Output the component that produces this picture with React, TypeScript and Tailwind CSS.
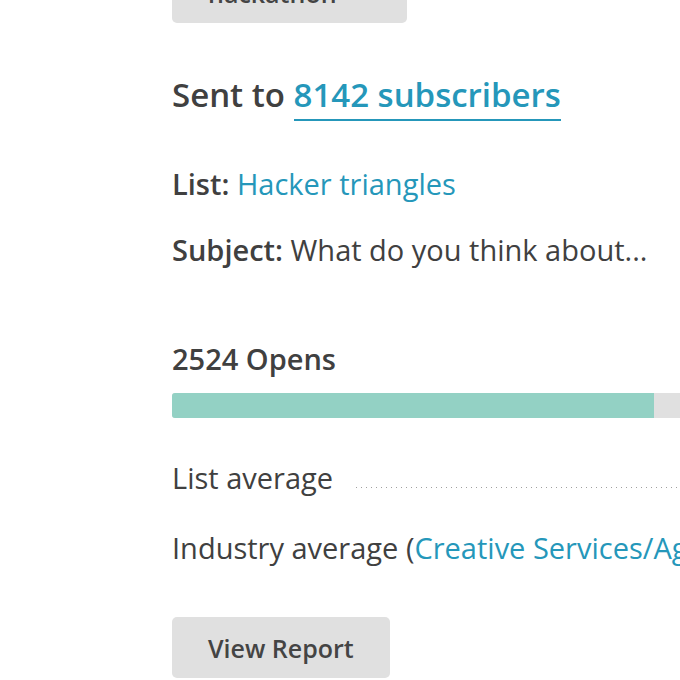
import React from "react";

function GrayButton({ label, className = "" }: { label: string; className?: string }) {
  return (
    <div
      className={`flex h-[61px] items-center whitespace-nowrap rounded-[5px] bg-[#e0e0e0] px-9 text-[25px] font-semibold leading-[32px] text-[#444] ${className}`}
    >
      {label}
    </div>
  );
}

export default function App() {
  return (
    <div className="h-[680px] w-[680px] overflow-hidden bg-white font-['Open_Sans',sans-serif] text-[#404040]">
      <div className="w-[620px] pl-[172px]">
        {/* previous card's button, cut off at the top */}
        <GrayButton label="hackathon" className="mt-[-38px] w-[235px]" />

        <h2 className="mt-[50px] whitespace-nowrap text-[33px] font-semibold leading-[44px]">
          Sent to{" "}
          <span className="border-b-2 border-[#2597ba] pb-[2px] text-[#2597ba]">8142 subscribers</span>
        </h2>

        <p className="mt-[48px] whitespace-nowrap text-[29px] leading-[38px]">
          <span className="font-semibold">List:</span> <span className="text-[#2597ba]">Hacker triangles</span>
        </p>
        <p className="mt-[28px] whitespace-nowrap text-[29px] leading-[38px]">
          <span className="font-semibold">Subject:</span> What do you think about...
        </p>

        {/* opens */}
        <p className="mt-[71px] whitespace-nowrap text-[29px] font-semibold leading-[38px]">2524 Opens</p>
        <div className="mt-[15px] flex h-[25px] w-[600px] overflow-hidden rounded-l-[3px] bg-[#e0e0e0]">
          <div className="h-full w-[482px] bg-[#93d1c4]" />
        </div>

        <div className="mt-[41px] flex w-[600px] items-start text-[29px] leading-[38px]">
          <span className="shrink-0">List average</span>
          <div className="ml-[23px] mt-[28px] h-px flex-1 bg-[linear-gradient(to_right,#a0a0a0_1px,transparent_1px)] bg-[length:5px_1px]" />
        </div>

        <p className="mt-[32px] whitespace-nowrap text-[29px] leading-[38px]">
          Industry average (<span className="text-[#2597ba]">Creative Services/Agencies</span>)
        </p>

        <GrayButton label="View Report" className="mt-[50px] w-fit" />
      </div>
    </div>
  );
}
